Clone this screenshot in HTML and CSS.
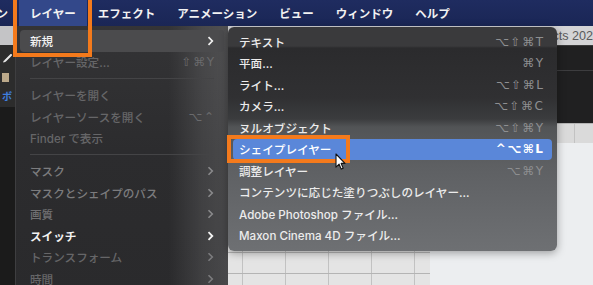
FILE: index.html
```html
<!DOCTYPE html>
<html lang="ja">
<head>
<meta charset="utf-8">
<title>レイヤー メニュー</title>
<link rel="stylesheet" href="styles.css">
</head>
<body>
<div class="screen">
  <header class="menubar">
    <span class="mb-item mb-cut">ン</span>
    <span class="mb-item mb-active">レイヤー</span>
    <span class="mb-item">エフェクト</span>
    <span class="mb-item">アニメーション</span>
    <span class="mb-item">ビュー</span>
    <span class="mb-item">ウィンドウ</span>
    <span class="mb-item">ヘルプ</span>
  </header>

  <main class="workspace">
    <aside class="toolstrip">
      <div class="ts-tab"></div>
      <div class="ts-tools">
        <svg class="ts-brush" width="10" height="10" viewBox="0 0 10 10"><path d="M9 1 3.5 6.5" stroke="#e8e8e8" stroke-width="2" stroke-linecap="round"/><path d="M3.2 6.2c-1.2 0-2 .8-2 2.3 1.5 0 2.6-.6 2.6-1.7z" fill="#e8e8e8"/></svg>
        <span class="ts-swatch"></span>
        <span class="ts-label">ボ</span>
      </div>
    </aside>
    <section class="stage">
      <div class="titlebar"><span class="title-text">Adobe After Effects 2023</span></div>
      <div class="dark-panel"><div class="panel-line"></div></div>
      <div class="brick brick-strip"></div>
      <div class="canvas">
        <div class="brick wall"></div>
        <div class="canvas-light"></div>
      </div>
    </section>
  </main>

  <nav class="menu menu-layer">
    <div class="row row-hover"><span class="label lit">新規</span><svg class="chev" width="7" height="10" viewBox="0 0 7 10"><path d="M1.5 1.2 5.3 5 1.5 8.8" fill="none" stroke="#f0f0f0" stroke-width="1.7"/></svg></div>
    <div class="row"><span class="label dim">レイヤー設定...</span><span class="key dim">⇧⌘Y</span></div>
    <div class="sep"></div>
    <div class="row"><span class="label dim">レイヤーを開く</span></div>
    <div class="row"><span class="label dim">レイヤーソースを開く</span><span class="key dim">⌥⌃</span></div>
    <div class="row"><span class="label dim">Finder で表示</span></div>
    <div class="sep"></div>
    <div class="row"><span class="label mid">マスク</span><svg class="chev" width="7" height="10" viewBox="0 0 7 10"><path d="M1.5 1.2 5.3 5 1.5 8.8" fill="none" stroke="#8a8a8c" stroke-width="1.6"/></svg></div>
    <div class="row"><span class="label mid">マスクとシェイプのパス</span><svg class="chev" width="7" height="10" viewBox="0 0 7 10"><path d="M1.5 1.2 5.3 5 1.5 8.8" fill="none" stroke="#8a8a8c" stroke-width="1.6"/></svg></div>
    <div class="row"><span class="label mid2">画質</span><svg class="chev" width="7" height="10" viewBox="0 0 7 10"><path d="M1.5 1.2 5.3 5 1.5 8.8" fill="none" stroke="#8a8a8c" stroke-width="1.6"/></svg></div>
    <div class="row"><span class="label lit bold">スイッチ</span><svg class="chev" width="7" height="10" viewBox="0 0 7 10"><path d="M1.5 1.2 5.3 5 1.5 8.8" fill="none" stroke="#f4f4f4" stroke-width="1.8"/></svg></div>
    <div class="row"><span class="label dim">トランスフォーム</span><svg class="chev" width="7" height="10" viewBox="0 0 7 10"><path d="M1.5 1.2 5.3 5 1.5 8.8" fill="none" stroke="#7c7c7e" stroke-width="1.6"/></svg></div>
    <div class="row"><span class="label dim">時間</span><svg class="chev" width="7" height="10" viewBox="0 0 7 10"><path d="M1.5 1.2 5.3 5 1.5 8.8" fill="none" stroke="#7c7c7e" stroke-width="1.6"/></svg></div>
  </nav>

  <nav class="menu menu-new">
    <div class="row"><span class="label">テキスト</span><span class="key">⌥⇧⌘T</span></div>
    <div class="row"><span class="label">平面...</span><span class="key">⌘Y</span></div>
    <div class="row"><span class="label">ライト...</span><span class="key">⌥⇧⌘L</span></div>
    <div class="row"><span class="label">カメラ...</span><span class="key">⌥⇧⌘C</span></div>
    <div class="row"><span class="label">ヌルオブジェクト</span><span class="key">⌥⇧⌘Y</span></div>
    <div class="row row-selected"><span class="label">シェイプレイヤー</span><span class="key">^⌥⌘L</span></div>
    <div class="row"><span class="label">調整レイヤー</span><span class="key">⌥⌘Y</span></div>
    <div class="row"><span class="label">コンテンツに応じた塗りつぶしのレイヤー...</span></div>
    <div class="row"><span class="label">Adobe Photoshop ファイル...</span></div>
    <div class="row"><span class="label">Maxon Cinema 4D ファイル...</span></div>
  </nav>

  <div class="callout callout-menu"></div>
  <div class="callout callout-item"></div>

  <svg class="cursor" width="11" height="17" viewBox="0 0 11 17"><path d="M1 1v13.2l3.1-3 2.1 4.9 2-.9-2.1-4.8H10z" fill="#fff" stroke="#111" stroke-width="1.1" stroke-linejoin="round"/></svg>
</div>
</body>
</html>
```

FILE: styles.css
```css
* { box-sizing: border-box; }

html, body {
  margin: 0;
  padding: 0;
  background: #1c1c1c;
}

.screen {
  position: relative;
  width: 593px;
  height: 285px;
  overflow: hidden;
  font-family: "Inter", "Noto Sans CJK JP", sans-serif;
  display: flex;
  flex-direction: column;
}

/* ---------- menu bar ---------- */
.menubar {
  height: 26px;
  flex: none;
  display: flex;
  align-items: stretch;
  background: linear-gradient(#1f2c60, #1a2655);
  color: #f2f2f2;
  font-size: 11.5px;
  font-weight: 700;
}

.mb-item {
  display: flex;
  align-items: center;
  padding: 0 11px;
  white-space: nowrap;
}

.mb-cut {
  margin-left: -3.5px;
  padding-left: 0;
}

.mb-active {
  background: #33488a;
}

/* ---------- background workspace ---------- */
.workspace {
  flex: 1;
  display: flex;
  min-height: 0;
}

.toolstrip {
  width: 15px;
  flex: none;
  display: flex;
  flex-direction: column;
  background: #1d1d1d;
}

.ts-tab {
  height: 19px;
  background: #c4c4c6;
}

.ts-tools {
  flex: 1;
  display: flex;
  flex-direction: column;
  align-items: flex-start;
  padding: 9px 0 0 2px;
  gap: 9px;
  background: linear-gradient(#2c2c2c 0 62px, #1b1b1b 62px);
}

.ts-swatch {
  width: 7px;
  height: 9px;
  background: #bba98a;
}

.ts-label {
  font-family: "Noto Sans CJK JP", sans-serif;
  font-size: 10px;
  font-weight: 700;
  line-height: 10px;
  color: #3f7fe0;
}

.stage {
  flex: 1;
  display: flex;
  flex-direction: column;
  min-width: 0;
}

.titlebar {
  height: 19px;
  flex: none;
  background: #d4d4d6;
  display: flex;
  align-items: center;
  padding-left: 446px;
  white-space: nowrap;
  overflow: hidden;
}

.title-text {
  font-family: "Liberation Sans", sans-serif;
  font-size: 12.6px;
  color: #5a5a5c;
}

.dark-panel {
  height: 78px;
  flex: none;
  background: #202021;
  border-top: 1px solid #3a3a3a;
  padding-top: 24px;
}

.panel-line {
  height: 1px;
  background: #3d3d3f;
}

.brick {
  background-color: #e4e4e4;
  background-image:
    linear-gradient(#b4b4b4 1px, transparent 1px),
    linear-gradient(90deg, #c2c2c2 1px, transparent 1px);
  background-size: 100% 21px, 43px 21px;
}

.brick-strip {
  height: 20px;
  flex: none;
  background-color: #dadada;
}

.canvas {
  flex: 1;
  display: flex;
}

.wall {
  width: 415px;
  flex: none;
  background-position: 0 4px, 12px 0;
}

.canvas-light {
  flex: 1;
  background: #eceef0;
}

/* ---------- menus (overlays) ---------- */
.menu {
  position: absolute;
  font-size: 11.6px;
  font-weight: 500;
}

.row {
  height: 21.5px;
  display: flex;
  align-items: center;
  justify-content: space-between;
  white-space: nowrap;
}

.bold { font-weight: 700; }

.key {
  font-family: "DejaVu Sans", sans-serif;
  font-size: 12px;
  font-weight: 400;
  letter-spacing: 1.5px;
  margin-right: -1.5px;
}

.menu-layer {
  left: 15px;
  top: 26px;
  width: 213px;
  height: 275px;
  padding: 4px 4px;
  background:
    linear-gradient(90deg, rgba(255,255,255,0) 72%, rgba(255,255,255,0.1) 88%, rgba(255,255,255,0.14) 100%),
    linear-gradient(#343436, #2c2c2e 45%, #2a2a2c);
  border-left: 1px solid #3e3e40;
}

.menu-layer .row {
  padding: 0 10px 0 10px;
}

.menu-layer .row-hover {
  background: #4b4b4d;
  border-radius: 4px;
}

.menu-layer .sep {
  height: 11.5px;
  display: flex;
  align-items: center;
  margin: 0 10px;
}

.menu-layer .sep::before {
  content: "";
  flex: 1;
  height: 1px;
  background: #444446;
}

.lit { color: #f2f2f2; }
.dim { color: #666668; }
.mid { color: #7c7c7e; }
.mid2 { color: #707072; }

.menu-layer .key { color: #6a6a6c; }

.menu-new {
  left: 228px;
  top: 27px;
  width: 329px;
  padding: 4px 5px 5px;
  border-radius: 6px;
  background: linear-gradient(#3a3a3c 0, #3a3a3c 19px, #2b2b2d 21px, #303032 70px, #3b3c3e 92px, #525456 100px, #5e6063 140px, #6e7073 224px);
  box-shadow: 0 2px 8px rgba(0,0,0,0.35);
  color: #ececec;
}

.menu-new .row {
  padding: 0 9px 0 6px;
}

.menu-new .key {
  color: #8e8f91;
}

.menu-new .row-selected {
  background: #5a87d9;
  border-radius: 4px;
  color: #ffffff;
}

.menu-new .row-selected .key {
  color: #ffffff;
  font-weight: 700;
}

/* ---------- annotations ---------- */
.callout {
  position: absolute;
  border: 4px solid #f47a1c;
}

.callout-menu {
  left: 13px;
  top: -4px;
  width: 79px;
  height: 61px;
}

.callout-item {
  left: 227px;
  top: 135px;
  width: 123px;
  height: 28px;
}

.cursor {
  position: absolute;
  left: 335px;
  top: 153px;
}
```
